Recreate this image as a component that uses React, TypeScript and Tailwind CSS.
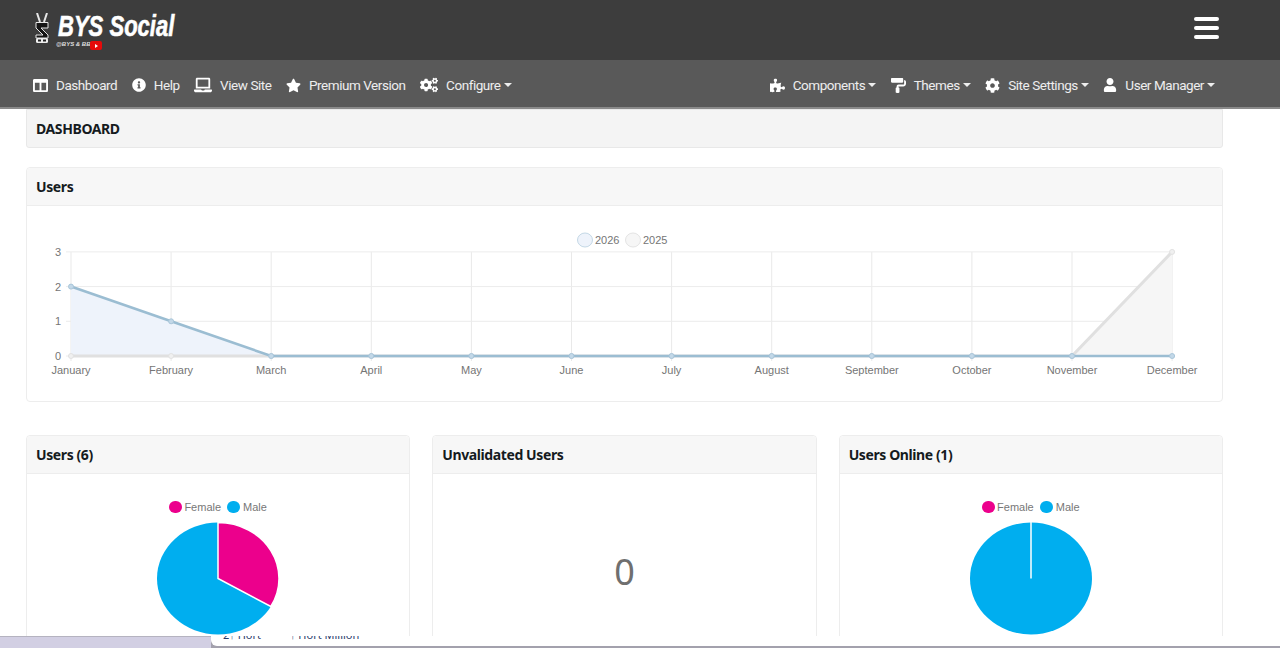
import { FaColumns, FaInfoCircle, FaLaptop, FaStar, FaCogs, FaPuzzlePiece, FaPaintRoller, FaCog, FaUser } from 'react-icons/fa';
import type { IconType } from 'react-icons';

const months = ['January', 'February', 'March', 'April', 'May', 'June', 'July', 'August', 'September', 'October', 'November', 'December'];
const current = [2, 1, 0, 0, 0, 0, 0, 0, 0, 0, 0, 0];
const previous = [0, 0, 0, 0, 0, 0, 0, 0, 0, 0, 0, 3];

const x0 = 44;
const step = 100.1;
const yOf = (v: number) => 150 - v * 34.7;
const xOf = (i: number) => x0 + i * step;

function NavItem({ icon: Icon, label, caret, size = 15 }: { icon: IconType; label: string; caret?: boolean; size?: number }) {
  return (
    <a className="flex items-center text-white/90 text-[13.5px] tracking-[-0.45px] whitespace-nowrap font-['Roboto',sans-serif]">
      <Icon size={size} className="text-white mr-[8px] shrink-0" />
      {label}
      {caret && <span className="ml-[3px] mt-[-1px] border-x-[4px] border-x-transparent border-t-[4px] border-t-white/90" />}
    </a>
  );
}

function Card({ title, className, children }: { title: string; className?: string; children: React.ReactNode }) {
  return (
    <div className={`border border-[#ededed] rounded-[4px] bg-white ${className ?? ''}`}>
      <div className="h-[38px] flex items-center px-[9px] bg-[#f7f7f7] border-b border-[#ededed] rounded-t-[4px] text-[14px] font-bold text-[#151b1e] tracking-[-0.4px]">
        {title}
      </div>
      {children}
    </div>
  );
}

function LineChart() {
  const line = (d: number[]) => d.map((v, i) => `${xOf(i)},${yOf(v)}`).join(' ');
  const area = (d: number[]) => `${line(d)} ${xOf(11)},${yOf(0)} ${xOf(0)},${yOf(0)}`;
  return (
    <svg width={1194} height={196} className="block" fontFamily="'Liberation Sans', sans-serif">
      {months.map((_, i) => (
        <line key={i} x1={xOf(i)} x2={xOf(i)} y1={yOf(3)} y2={yOf(0) + 5} stroke="#e9e9e9" />
      ))}
      {[0, 1, 2, 3].map((v) => (
        <line key={v} x1={x0 - 5} x2={xOf(11)} y1={yOf(v)} y2={yOf(v)} stroke="#ececec" />
      ))}
      <polygon points={area(previous)} fill="#f6f6f6" />
      <polygon points={area(current)} fill="#eef3fb" />
      <polyline points={line(previous)} fill="none" stroke="#e0e0e0" strokeWidth={3} />
      {previous.map((v, i) => (
        <circle key={i} cx={xOf(i)} cy={yOf(v)} r={2.5} fill="#f0f0f0" stroke="#e2e2e2" />
      ))}
      <polyline points={line(current)} fill="none" stroke="#9bbdd2" strokeWidth={2.6} />
      {current.map((v, i) => (
        <circle key={i} cx={xOf(i)} cy={yOf(v)} r={2.5} fill="#c3d8e8" stroke="#a9c6da" />
      ))}
      {[0, 1, 2, 3].map((v) => (
        <text key={v} x={34} y={yOf(v) + 4} textAnchor="end" fontSize={11} fill="#757575">{v}</text>
      ))}
      {months.map((m, i) => (
        <text key={m} x={xOf(i)} y={168} textAnchor="middle" fontSize={11} fill="#757575">{m}</text>
      ))}
      <ellipse cx={558} cy={34} rx={7.5} ry={7} fill="#eef3fb" stroke="#c4d8e6" />
      <text x={568} y={38} fontSize={11} fill="#757575">2026</text>
      <ellipse cx={606} cy={34} rx={7.5} ry={7} fill="#f6f6f6" stroke="#e4e4e4" />
      <text x={616} y={38} fontSize={11} fill="#757575">2025</text>
    </svg>
  );
}

function PieLegend() {
  return (
    <div className="flex justify-center items-center gap-[6px] text-[11px] text-[#777] font-['Liberation_Sans',sans-serif] h-[14px]">
      <span className="flex items-center gap-[2px]">
        <span className="w-[13px] h-[12px] rounded-full bg-[#ec008c]" />
        Female
      </span>
      <span className="flex items-center gap-[3px]">
        <span className="w-[13px] h-[12px] rounded-full bg-[#00aeef]" />
        Male
      </span>
    </div>
  );
}

// start at 12 o'clock, a female slice of `share` of the circle, the rest male
function Pie({ share }: { share: number }) {
  const r = 61;
  const a = share * 2 * Math.PI;
  const px = 62 + r * Math.sin(a);
  const py = 56.5 - 56 * Math.cos(a);
  return (
    <svg width={124} height={113} className="block mx-auto">
      <ellipse cx={62} cy={56.5} rx={r} ry={56} fill="#00aeef" />
      {share > 0 && <path d={`M62 56.5 L62 0.5 A${r} 56 0 0 1 ${px} ${py} Z`} fill="#ec008c" stroke="#fff" strokeWidth={1.5} />}
      {share === 0 && <line x1={62} y1={0} x2={62} y2={56.5} stroke="#fff" strokeWidth={1.5} />}
    </svg>
  );
}

export default function App() {
  return (
    <div className="relative h-[648px] overflow-hidden bg-white font-['Noto_Sans','Open_Sans',sans-serif]">
      <header className="h-[60px] bg-[#3d3d3d] flex items-center justify-between pl-[33px] pr-[61px]">
        <div className="relative h-[48px] w-[142px] mt-[-4px]">
          <svg width={14} height={31} viewBox="0 0 14 31" className="absolute left-[2px] top-[9px]">
            <path d="M2 0 L5 9 M12 0 L9 9" stroke="#e6e6e6" strokeWidth={2} fill="none" />
            <path d="M1 9.5 H13 V15 L6 15 L13 22 V25 H1 V22 H8 L1 15 Z" fill="#161616" stroke="#e6e6e6" strokeWidth={1} />
            <rect x="1" y="25" width="12" height="5" rx="1.5" fill="#eee" />
            <rect x="3" y="26.5" width="3" height="2" fill="#222" />
            <rect x="8" y="26.5" width="3" height="2" fill="#222" />
          </svg>
          <span className="absolute left-[25px] top-[6px] text-white font-['Liberation_Sans',sans-serif] font-bold italic text-[29px] leading-[32px] [-webkit-text-stroke:0.6px_white] whitespace-nowrap scale-x-[0.76] origin-left">
            BYS Social
          </span>
          <span className="absolute left-[23px] top-[36px] text-[#ddd] font-['Liberation_Sans',sans-serif] font-bold italic text-[6px] leading-[8px] whitespace-nowrap">@BYS &amp; BB</span>
          <span className="absolute left-[57px] top-[37px] w-[12px] h-[9px] rounded-[2px] bg-[#e60a0a] flex items-center justify-center">
            <span className="border-y-[2px] border-y-transparent border-l-[3px] border-l-white" />
          </span>
        </div>
        <div className="flex flex-col gap-[5px] w-[25px] mb-[4px]">
          <span className="h-[4px] rounded-full bg-white" />
          <span className="h-[4px] rounded-full bg-white" />
          <span className="h-[4px] rounded-full bg-white" />
        </div>
      </header>

      <nav className="h-[49px] pt-[3px] bg-[#595959] border-b-2 border-[#8a8a8a] flex items-center justify-between pl-[33px] pr-[65px]">
        <div className="flex items-center gap-[14.5px]">
          <NavItem icon={FaColumns} label="Dashboard" />
          <NavItem icon={FaInfoCircle} label="Help" size={14} />
          <NavItem icon={FaLaptop} label="View Site" size={18} />
          <NavItem icon={FaStar} label="Premium Version" />
          <NavItem icon={FaCogs} label="Configure" size={18} caret />
        </div>
        <div className="flex items-center gap-[14.5px]">
          <NavItem icon={FaPuzzlePiece} label="Components" caret />
          <NavItem icon={FaPaintRoller} label="Themes" caret />
          <NavItem icon={FaCog} label="Site Settings" caret />
          <NavItem icon={FaUser} label="User Manager" size={14} caret />
        </div>
      </nav>

      <main className="pl-[26px] w-[1223px]">
        <div className="h-[39px] flex items-center px-[9px] bg-[#f4f4f4] border border-[#e8e8e8] rounded-b-[3px] text-[14px] font-bold text-[#151b1e] tracking-[-0.4px]">
          DASHBOARD
        </div>

        <Card title="Users" className="mt-[19px] h-[235px]">
          <LineChart />
        </Card>

        <div className="mt-[33px] grid grid-cols-3 gap-[22px]">
          <Card title="Users (6)" className="h-[240px]">
            <div className="pt-[26px]">
              <PieLegend />
              <div className="mt-[8px]"><Pie share={1 / 3} /></div>
            </div>
          </Card>
          <Card title="Unvalidated Users" className="h-[240px]">
            <div className="flex justify-center pt-[71px] text-[36px] leading-[54px] text-[#6f6f6f]">0</div>
          </Card>
          <Card title="Users Online (1)" className="h-[240px]">
            <div className="pt-[26px]">
              <PieLegend />
              <div className="mt-[8px]"><Pie share={0} /></div>
            </div>
          </Card>
        </div>
      </main>

      {/* bit of the browser window behind, over the bottom of the page */}
      <div className="absolute inset-x-0 bottom-0 h-[12px] bg-[#d2cfe3] border-t border-[#b5b3c0] flex">
        <div className="ml-[211px] flex-1 h-[12px] mt-[-1px] bg-[#a3a1ad]">
          <div className="h-[10px] bg-white rounded-bl-[6px] overflow-hidden relative">
            <span className="absolute left-[12px] top-[-7px] text-[11px] leading-[12px] text-[#2a3a6b] whitespace-nowrap">2↑ Hört</span>
            <span className="absolute left-[79px] top-[-7px] text-[11px] leading-[12px] text-[#2a3a6b] whitespace-nowrap">↑ Hört Million</span>
          </div>
        </div>
      </div>
    </div>
  );
}
